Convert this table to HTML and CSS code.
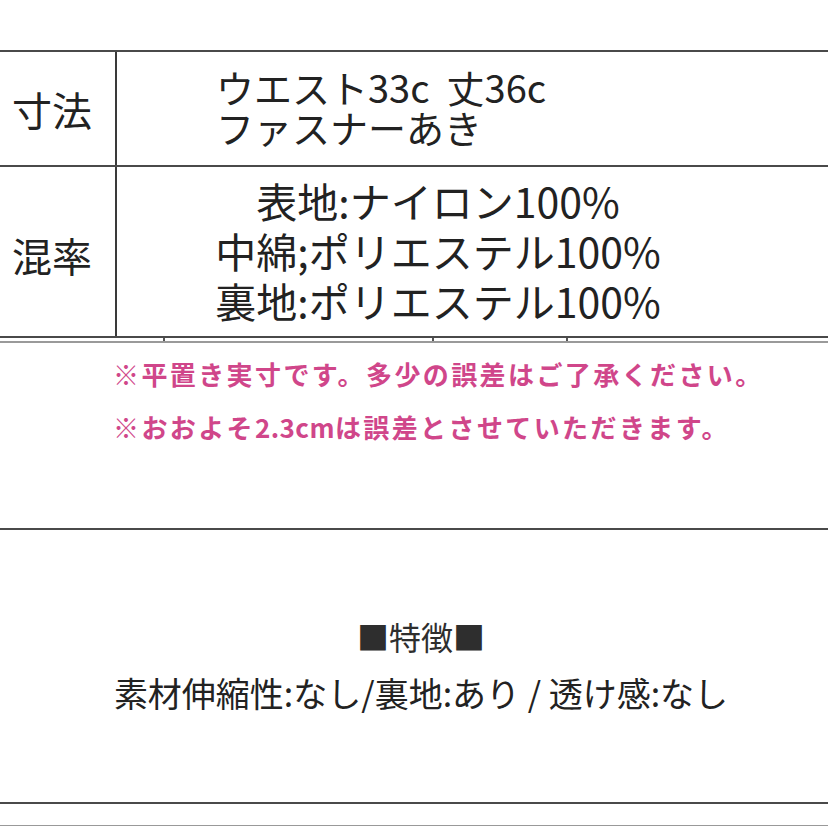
FILE: index.html
```html
<!DOCTYPE html>
<html lang="ja">
<head>
<meta charset="utf-8">
<link rel="stylesheet" href="styles.css">
</head>
<body>
<div class="page">
  <div class="spec">
    <div class="row row-size">
      <div class="label">寸法</div>
      <div class="val val-left">
        <div>ウエスト33c&nbsp;&nbsp;丈36c</div>
        <div>ファスナーあき</div>
      </div>
    </div>
    <div class="row row-mix">
      <div class="label">混率</div>
      <div class="val val-center">
        <div>表地:ナイロン100%</div>
        <div>中綿;ポリエステル100%</div>
        <div>裏地:ポリエステル100%</div>
      </div>
    </div>
  </div>
  <div class="subline">
    <span class="tick t1"></span>
    <span class="tick t2"></span>
    <span class="tick t3"></span>
  </div>
  <div class="notes">
    <div>※平置き実寸です。多少の誤差はご了承ください。</div>
    <div>※おおよそ<span class="latin">2.3cm</span>は誤差とさせていただきます。</div>
  </div>
  <div class="features">
    <div class="feat-title">■特徴■</div>
    <div class="feat-text">素材伸縮性:なし/裏地:あり / 透け感:なし</div>
  </div>
  <div class="bottom"></div>
</div>
</body>
</html>
```
FILE: styles.css
```css
html, body {
  margin: 0;
  padding: 0;
  background: #ffffff;
}
.page {
  width: 828px;
  height: 828px;
  overflow: hidden;
  padding-top: 50px;
  box-sizing: border-box;
  font-family: "Noto Sans CJK JP", "Noto Sans", sans-serif;
  color: #222222;
}
.spec {
  border-top: 2px solid #4a4a4a;
}
.row {
  display: flex;
  border-bottom: 2px solid #4a4a4a;
}
.row-size { height: 113px; }
.row-mix { height: 169px; }
.label {
  width: 117px;
  flex: none;
  border-right: 2px solid #3a3a3a;
  display: flex;
  align-items: center;
  padding-left: 12px;
  box-sizing: border-box;
  font-size: 40px;
  line-height: 1;
}
.row-mix .label { padding-top: 6px; }
.val {
  flex: 1;
  display: flex;
  flex-direction: column;
  justify-content: center;
}
.val-left {
  padding-left: 99px;
  padding-bottom: 4px;
  font-size: 38px;
  line-height: 40px;
}
.val-center {
  align-items: center;
  padding-right: 69px;
  padding-bottom: 3px;
  font-size: 41px;
  line-height: 50px;
}
.subline {
  position: relative;
  height: 3px;
  border-bottom: 2px solid #9a9a9a;
}
.tick {
  position: absolute;
  top: 0;
  width: 2px;
  height: 3px;
  background: #555555;
}
.t1 { left: 163px; }
.t2 { left: 432px; }
.t3 { left: 566px; }
.notes {
  height: 185px;
  box-sizing: border-box;
  padding-top: 4px;
  padding-left: 113px;
  color: #d0468a;
  font-weight: 700;
  font-size: 26px;
  letter-spacing: 2.4px;
  line-height: 53px;
}
.latin {
  letter-spacing: 0.4px;
}
.features {
  height: 276px;
  box-sizing: border-box;
  border-top: 2px solid #4a4a4a;
  border-bottom: 2px solid #4a4a4a;
  padding-top: 81px;
  padding-left: 14px;
  text-align: center;
}
.feat-title {
  font-size: 32px;
  line-height: 50px;
  color: #2e2e2e;
}
.feat-text {
  font-size: 34px;
  line-height: 64px;
}
.bottom {
  height: 21px;
  border-bottom: 1px solid #999999;
}
```
